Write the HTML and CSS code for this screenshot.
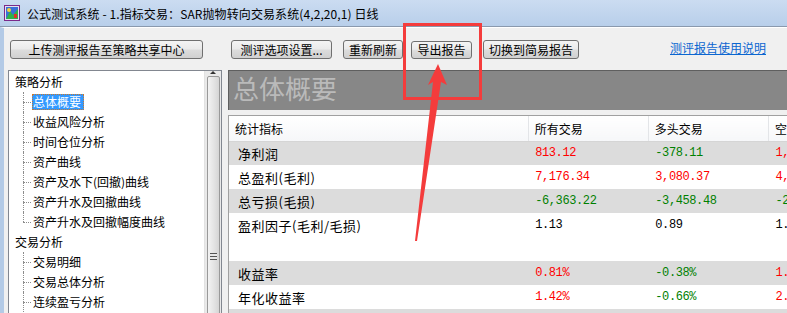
FILE: index.html
```html
<!DOCTYPE html>
<html lang="zh-CN">
<head>
    <meta charset="UTF-8">
    <title>公式测试系统</title>
    <link rel="stylesheet" href="styles.css">
</head>
<body>
    <div class="window">
        <div class="titlebar">
            <svg class="app-icon" width="16" height="16" viewBox="0 0 16 16">
                <rect x="0.5" y="0.5" width="15" height="15" fill="#e8e0f0" stroke="#7a2a8a"/>
                <rect x="2" y="2" width="12" height="12" fill="#3a6fd8"/>
                <path d="M2 14 L6 6 L9 10 L14 4 L14 14 Z" fill="#2fb24a"/>
                <circle cx="5" cy="5" r="2" fill="#f2d23a"/>
                <rect x="10" y="9" width="3" height="4" fill="#e0302a"/>
            </svg>
            <span class="title">公式测试系统 - 1.指标交易：SAR抛物转向交易系统(4,2,20,1) 日线</span>
        </div>
        <div class="frame">
            <div class="toolbar">
                <button class="btn btn-upload">上传测评报告至策略共享中心</button>
                <button class="btn btn-options">测评选项设置...</button>
                <button class="btn btn-refresh">重新刷新</button>
                <button class="btn btn-export">导出报告</button>
                <button class="btn btn-simple">切换到简易报告</button>
                <a class="help-link" href="#">测评报告使用说明</a>
            </div>
            <div class="panes">
                <div class="tree">
                    <div class="tree-list">
                        <div class="node"><span class="label">策略分析</span></div>
                        <ul class="children">
                            <li><span class="label selected">总体概要</span></li>
                            <li><span class="label">收益风险分析</span></li>
                            <li><span class="label">时间仓位分析</span></li>
                            <li><span class="label">资产曲线</span></li>
                            <li><span class="label">资产及水下(回撤)曲线</span></li>
                            <li><span class="label">资产升水及回撤曲线</span></li>
                            <li><span class="label">资产升水及回撤幅度曲线</span></li>
                        </ul>
                        <div class="node"><span class="label">交易分析</span></div>
                        <ul class="children more">
                            <li><span class="label">交易明细</span></li>
                            <li><span class="label">交易总体分析</span></li>
                            <li><span class="label">连续盈亏分析</span></li>
                        </ul>
                    </div>
                    <div class="tree-scroll">
                        <div class="scroll-up"></div>
                        <div class="scroll-thumb"><span class="grip"></span></div>
                    </div>
                </div>
                <div class="report">
                    <div class="banner">总体概要</div>
                    <div class="sheet">
                        <table class="stats">
                            <colgroup>
                                <col class="col-name">
                                <col class="col-val">
                                <col class="col-val">
                                <col class="col-val">
                            </colgroup>
                            <thead>
                                <tr>
                                    <th>统计指标</th>
                                    <th>所有交易</th>
                                    <th>多头交易</th>
                                    <th>空头交易</th>
                                </tr>
                            </thead>
                            <tbody>
                                <tr class="shade">
                                    <td class="name">净利润</td>
                                    <td class="num up">813.12</td>
                                    <td class="num down">-378.11</td>
                                    <td class="num up">1,191.23</td>
                                </tr>
                                <tr>
                                    <td class="name">总盈利(毛利)</td>
                                    <td class="num up">7,176.34</td>
                                    <td class="num up">3,080.37</td>
                                    <td class="num up">4,095.97</td>
                                </tr>
                                <tr class="shade">
                                    <td class="name">总亏损(毛损)</td>
                                    <td class="num down">-6,363.22</td>
                                    <td class="num down">-3,458.48</td>
                                    <td class="num down">-2,904.74</td>
                                </tr>
                                <tr>
                                    <td class="name">盈利因子(毛利/毛损)</td>
                                    <td class="num">1.13</td>
                                    <td class="num">0.89</td>
                                    <td class="num">1.41</td>
                                </tr>
                                <tr class="blank">
                                    <td></td><td></td><td></td><td></td>
                                </tr>
                                <tr class="shade">
                                    <td class="name">收益率</td>
                                    <td class="num up">0.81%</td>
                                    <td class="num down">-0.38%</td>
                                    <td class="num up">1.19%</td>
                                </tr>
                                <tr>
                                    <td class="name">年化收益率</td>
                                    <td class="num up">1.42%</td>
                                    <td class="num down">-0.66%</td>
                                    <td class="num up">2.08%</td>
                                </tr>
                                <tr class="shade">
                                    <td></td><td></td><td></td><td></td>
                                </tr>
                            </tbody>
                        </table>
                    </div>
                </div>
            </div>
        </div>

        <!-- 标注：红框和箭头 -->
        <div class="callout-box"></div>
        <svg class="callout-arrow" width="787" height="313" viewBox="0 0 787 313">
            <polygon points="438,64 447,85 441,82 417,241 415,241 433,82 428,85" fill="#f43c3c"/>
        </svg>
    </div>
</body>
</html>
```

FILE: styles.css
```css
* {
    box-sizing: border-box;
}
body {
    margin: 0;
    width: 787px;
    height: 313px;
    overflow: hidden;
    font-family: "Noto Sans CJK SC", sans-serif;
    font-size: 12px;
    background: #f0f0f0;
    color: #000;
}
.window {
    position: relative;
    width: 787px;
    height: 313px;
    display: flex;
    flex-direction: column;
    overflow: hidden;
}

/* 标题栏 */
.titlebar {
    height: 27px;
    flex: none;
    display: flex;
    align-items: center;
    gap: 7px;
    padding-left: 4px;
    background: linear-gradient(#cbdcf1, #b8cfea);
    border-bottom: 1px solid #8a99ad;
}
.app-icon {
    flex: none;
}
.title {
    font-size: 12px;
    letter-spacing: 0.1px;
    white-space: nowrap;
}

.frame {
    flex: 1;
    min-height: 0;
    display: flex;
    flex-direction: column;
    border-left: 4px solid #b3cae6;
    border-top: 1px solid #fff;
}

/* 工具栏 */
.toolbar {
    height: 42px;
    flex: none;
    display: flex;
    align-items: flex-start;
    padding-top: 12px;
    padding-right: 21px;
}
.btn {
    height: 19px;
    padding: 0;
    font-family: "Noto Sans CJK SC", sans-serif;
    font-size: 12px;
    line-height: 16px;
    color: #000;
    border: 1px solid #707070;
    border-radius: 3px;
    background: linear-gradient(#f4f4f4 0%, #ebebeb 45%, #dcdcdc 55%, #d0d0d0 100%);
    white-space: nowrap;
}
.btn-upload {
    margin-left: 6px;
    width: 193px;
}
.btn-options {
    margin-left: 28px;
    width: 101px;
}
.btn-refresh {
    margin-left: 11px;
    width: 60px;
}
.btn-export {
    margin-left: 8px;
    margin-top: 1px;
    height: 18px;
    width: 61px;
}
.btn-simple {
    margin-left: 11px;
    width: 96px;
}
.help-link {
    margin-left: auto;
    margin-top: -1px;
    color: #0b66d0;
    text-decoration: underline;
    line-height: 17px;
}

/* 左侧树 */
.panes {
    flex: 1;
    min-height: 0;
    display: flex;
    padding-left: 4px;
}
.tree {
    width: 214px;
    flex: none;
    display: flex;
    background: #fff;
    border: 1px solid #828790;
    border-bottom: none;
}
.tree-list {
    flex: 1;
    padding: 1px 0 0 6px;
    overflow: hidden;
}
.node,
.children li {
    height: 20px;
    display: flex;
    align-items: center;
    white-space: nowrap;
}
.children {
    list-style: none;
    margin: 0;
    padding: 0 0 0 17px;
}
.children li {
    position: relative;
}
.children li::before {
    content: "";
    position: absolute;
    left: -9px;
    top: 0;
    bottom: 0;
    border-left: 1px dotted #8c8c8c;
}
.children li:last-child::before {
    bottom: 10px;
}
.children.more li:last-child::before {
    bottom: -10px;
}
.children li::after {
    content: "";
    position: absolute;
    left: -9px;
    top: 10px;
    width: 8px;
    border-top: 1px dotted #8c8c8c;
}
.label {
    display: inline-block;
    line-height: 14px;
    padding: 0 2px 0 0;
    border: 1px solid transparent;
}
.node .label {
    border: none;
}
.label.selected {
    background: #3399ff;
    color: #fff;
    border: 1px dotted #c9782c;
}
.tree-scroll {
    width: 17px;
    flex: none;
    display: flex;
    flex-direction: column;
    align-items: center;
    background: #e9e9e9;
    border-left: 1px solid #e2e2e2;
}
.scroll-up {
    height: 17px;
    width: 100%;
    display: flex;
    align-items: center;
    justify-content: center;
}
.scroll-up::before {
    content: "";
    border-left: 3px solid transparent;
    border-right: 3px solid transparent;
    border-bottom: 3px solid #333;
}
.scroll-thumb {
    margin-top: 2px;
    width: 13px;
    height: 360px;
    flex: none;
    display: flex;
    align-items: center;
    justify-content: center;
    border: 1px solid #999;
    border-radius: 2px;
    background: linear-gradient(90deg, #f3f3f3, #e2e2e2 60%, #d5d5d5);
}
.grip {
    width: 7px;
    height: 7px;
    background: repeating-linear-gradient(#555 0 1px, #e8e8e8 1px 3px);
}

/* 右侧报告 */
.report {
    flex: 1;
    min-width: 0;
    margin-left: 6px;
    display: flex;
    flex-direction: column;
    overflow: hidden;
}
.banner {
    height: 40px;
    flex: none;
    background: #878787;
    border-top: 1px solid #5f5f5f;
    border-left: 1px solid #5f5f5f;
    color: #bababa;
    font-size: 26px;
    line-height: 34px;
    padding-left: 4px;
    white-space: nowrap;
}
.sheet {
    flex: 1;
    margin-top: 5px;
    background: #fff;
    border-top: 1px solid #a0a0a0;
    border-left: 1px solid #a0a0a0;
}
.stats {
    border-collapse: collapse;
    table-layout: fixed;
    width: 660px;
}
.col-name {
    width: 299px;
}
.col-val {
    width: 120px;
}
.stats th {
    height: 25px;
    padding: 0 0 0 6px;
    text-align: left;
    font-weight: normal;
    font-size: 12px;
    white-space: nowrap;
    background: linear-gradient(#fff, #f6f7f9);
    border-right: 1px solid #e3e5e8;
    border-bottom: 1px solid #d5d5d5;
}
.stats td {
    height: 24px;
    padding: 0 0 0 7px;
    white-space: nowrap;
    overflow: hidden;
}
.stats td.name {
    padding-left: 9px;
    font-size: 13px;
    letter-spacing: 0.5px;
}
.stats td.num {
    font-family: "Liberation Mono", monospace;
    font-size: 12px;
    letter-spacing: -0.4px;
}
.stats tr.shade td {
    background: #dcdcdc;
}
.up {
    color: #ff0000;
}
.down {
    color: #008000;
}

/* 标注 */
.callout-box {
    position: absolute;
    left: 403px;
    top: 23px;
    width: 79px;
    height: 77px;
    border: 3px solid #f43c3c;
}
.callout-arrow {
    position: absolute;
    left: 0;
    top: 0;
    pointer-events: none;
}
```
